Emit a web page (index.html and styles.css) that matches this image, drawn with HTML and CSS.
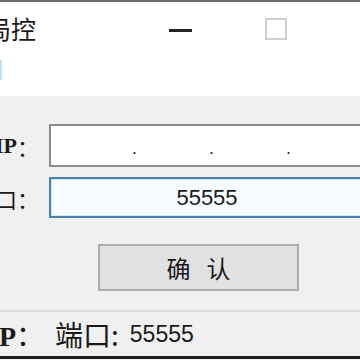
FILE: index.html
```html
<!DOCTYPE html>
<html>
	<head>
		<title>局控</title>
		<meta http-equiv="Content-Type" content="text/html; charset=UTF-8">
		<link rel="stylesheet" href="styles.css">
	</head>
	<body>
		<div class="window">
			<div class="titlebar">
				<div class="caption">
					<div class="title">局控</div>
					<div class="tab-mark"></div>
				</div>
				<div class="caption-btns">
					<div class="cbtn"><span class="min-glyph"></span></div>
					<div class="cbtn"><span class="max-glyph"></span></div>
					<div class="cbtn"></div>
				</div>
			</div>

			<div class="panel">
				<div class="form">
					<div class="label"><span class="latin">IP</span>：</div>
					<div class="field ip">
						<span class="seg"></span><span class="dot">.</span>
						<span class="seg"></span><span class="dot">.</span>
						<span class="seg"></span><span class="dot">.</span>
						<span class="seg"></span>
					</div>
					<div class="label">端口：</div>
					<div class="field port">55555</div>
				</div>
				<div class="actions">
					<button class="okbtn"><span>确</span><span>认</span></button>
				</div>
			</div>

			<div class="status">
				<span class="st-ip"><span class="latin">IP</span>：</span>
				<span class="st-port">端口:</span><span class="st-num">55555</span>
			</div>
		</div>
	</body>
</html>
```

FILE: styles.css
```css
html, body {
	margin: 0;
	padding: 0;
	width: 360px;
	height: 360px;
	overflow: hidden;
	background: #f0f0f0;
}

body {
	font-family: "Noto Sans CJK SC", "Liberation Sans", sans-serif;
	color: #1a1a1a;
}

.window {
	margin-left: -40px;
	width: 460px;
	border-top: 2px solid #6e6e6e;
	border-bottom: 3px solid #1e1e1e;
}

.latin {
	font-family: "Liberation Serif", serif;
	font-weight: bold;
}

/* title bar */
.titlebar {
	height: 94px;
	background: #fff;
	display: flex;
}
.caption {
	flex: 1;
	padding-left: 26px;
}
.title {
	font-size: 25px;
	line-height: 25px;
	margin-top: 14px;
}
.tab-mark {
	width: 2px;
	height: 20px;
	margin: 19px 0 0 14px;
	background: #bfe3f5;
}
.caption-btns {
	display: flex;
}
.cbtn {
	width: 96px;
	height: 60px;
	display: flex;
	justify-content: center;
	align-items: flex-start;
}
.min-glyph {
	width: 23px;
	height: 3px;
	margin-top: 27px;
	background: #222;
}
.max-glyph {
	width: 18px;
	height: 18px;
	margin-top: 16px;
	border: 2px solid #d0d0d0;
}

/* form */
.panel {
	padding: 28px 0 19px 0;
	border-bottom: 2px solid #dadada;
}
.form {
	display: grid;
	grid-template-columns: 89px 316px;
	row-gap: 10px;
}
.label {
	font-size: 22px;
	display: flex;
	align-items: center;
	justify-content: flex-end;
	padding-right: 10px;
}
.field {
	box-sizing: border-box;
	border: 2px solid #8c8c8c;
	background: #fff;
	font-family: "Liberation Sans", sans-serif;
}
.ip {
	height: 43px;
	display: flex;
	align-items: center;
	padding-left: 6px;
}
.seg {
	width: 79px;
}
.dot {
	width: 2px;
	font-size: 18px;
	line-height: 18px;
	color: #333;
	margin-top: 4px;
}
.port {
	height: 41px;
	border-color: #4a80b0;
	background: #f6fcff;
	box-shadow: inset 0 0 0 1px #d2ecfa;
	font-size: 22px;
	text-align: center;
	line-height: 37px;
}

.actions {
	padding: 26px 0 0 138px;
}
.okbtn {
	width: 201px;
	height: 47px;
	border: 2px solid #adadad;
	background: #e1e1e1;
	font-family: "Noto Sans CJK SC", sans-serif;
	font-size: 24px;
	color: #1a1a1a;
	display: flex;
	justify-content: center;
	align-items: center;
	gap: 16px;
	padding: 0;
}

/* status bar */
.status {
	height: 44px;
	display: flex;
	align-items: center;
	font-size: 28px;
	padding-left: 28px;
}
.st-ip {
	width: 67px;
}
.st-num {
	font-family: "Liberation Sans", sans-serif;
	font-size: 23px;
	margin-left: 11px;
}
```
